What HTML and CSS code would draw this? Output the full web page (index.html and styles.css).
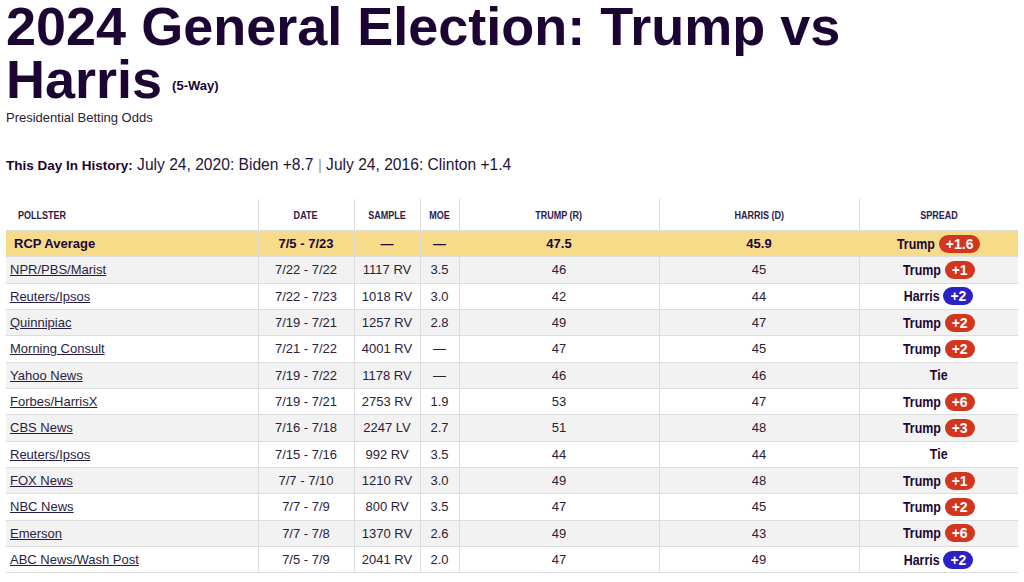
FILE: index.html
```html
<!DOCTYPE html>
<html>
<head>
<meta charset="utf-8">
<link rel="stylesheet" href="styles.css">
</head>
<body>
<div class="page">
  <h1 class="title">2024 General Election: Trump vs Harris<span class="way">(5-Way)</span></h1>
  <div class="subtitle">Presidential Betting Odds</div>
  <div class="history"><b>This Day In History:</b> July 24, 2020: Biden +8.7 <span class="sep">|</span> July 24, 2016: Clinton +1.4</div>
  <table class="polls">
    <colgroup>
      <col class="c-pollster"><col class="c-date"><col class="c-sample"><col class="c-moe"><col class="c-cand"><col class="c-cand"><col>
    </colgroup>
    <thead>
      <tr>
        <th class="pollster"><span class="hd">POLLSTER</span></th><th><span class="hd">DATE</span></th><th><span class="hd">SAMPLE</span></th><th><span class="hd">MOE</span></th><th><span class="hd">TRUMP (R)</span></th><th><span class="hd">HARRIS (D)</span></th><th><span class="hd">SPREAD</span></th>
      </tr>
    </thead>
    <tbody>
      <tr class="avg">
        <td class="pollster">RCP Average</td><td>7/5 - 7/23</td><td>—</td><td>—</td><td>47.5</td><td>45.9</td>
        <td><span class="spread"><span class="who">Trump</span><span class="badge r">+1.6</span></span></td>
      </tr>
      <tr><td class="pollster"><a href="#">NPR/PBS/Marist</a></td><td>7/22 - 7/22</td><td>1117 RV</td><td>3.5</td><td>46</td><td>45</td><td><span class="spread"><span class="who">Trump</span><span class="badge r">+1</span></span></td></tr>
      <tr><td class="pollster"><a href="#">Reuters/Ipsos</a></td><td>7/22 - 7/23</td><td>1018 RV</td><td>3.0</td><td>42</td><td>44</td><td><span class="spread"><span class="who">Harris</span><span class="badge d">+2</span></span></td></tr>
      <tr><td class="pollster"><a href="#">Quinnipiac</a></td><td>7/19 - 7/21</td><td>1257 RV</td><td>2.8</td><td>49</td><td>47</td><td><span class="spread"><span class="who">Trump</span><span class="badge r">+2</span></span></td></tr>
      <tr><td class="pollster"><a href="#">Morning Consult</a></td><td>7/21 - 7/22</td><td>4001 RV</td><td>—</td><td>47</td><td>45</td><td><span class="spread"><span class="who">Trump</span><span class="badge r">+2</span></span></td></tr>
      <tr><td class="pollster"><a href="#">Yahoo News</a></td><td>7/19 - 7/22</td><td>1178 RV</td><td>—</td><td>46</td><td>46</td><td><span class="spread"><span class="who">Tie</span></span></td></tr>
      <tr><td class="pollster"><a href="#">Forbes/HarrisX</a></td><td>7/19 - 7/21</td><td>2753 RV</td><td>1.9</td><td>53</td><td>47</td><td><span class="spread"><span class="who">Trump</span><span class="badge r">+6</span></span></td></tr>
      <tr><td class="pollster"><a href="#">CBS News</a></td><td>7/16 - 7/18</td><td>2247 LV</td><td>2.7</td><td>51</td><td>48</td><td><span class="spread"><span class="who">Trump</span><span class="badge r">+3</span></span></td></tr>
      <tr><td class="pollster"><a href="#">Reuters/Ipsos</a></td><td>7/15 - 7/16</td><td>992 RV</td><td>3.5</td><td>44</td><td>44</td><td><span class="spread"><span class="who">Tie</span></span></td></tr>
      <tr><td class="pollster"><a href="#">FOX News</a></td><td>7/7 - 7/10</td><td>1210 RV</td><td>3.0</td><td>49</td><td>48</td><td><span class="spread"><span class="who">Trump</span><span class="badge r">+1</span></span></td></tr>
      <tr><td class="pollster"><a href="#">NBC News</a></td><td>7/7 - 7/9</td><td>800 RV</td><td>3.5</td><td>47</td><td>45</td><td><span class="spread"><span class="who">Trump</span><span class="badge r">+2</span></span></td></tr>
      <tr><td class="pollster"><a href="#">Emerson</a></td><td>7/7 - 7/8</td><td>1370 RV</td><td>2.6</td><td>49</td><td>43</td><td><span class="spread"><span class="who">Trump</span><span class="badge r">+6</span></span></td></tr>
      <tr><td class="pollster"><a href="#">ABC News/Wash Post</a></td><td>7/5 - 7/9</td><td>2041 RV</td><td>2.0</td><td>47</td><td>49</td><td><span class="spread"><span class="who">Harris</span><span class="badge d">+2</span></span></td></tr>
    </tbody>
  </table>
</div>
</body>
</html>
```

FILE: styles.css
```css
html, body {
  margin: 0;
  padding: 0;
  background: #fff;
}
body {
  font-family: "Liberation Sans", Arial, Helvetica, sans-serif;
  color: #2a2237;
}
.page {
  padding: 0 6px;
}
.title {
  margin: 0;
  font-size: 54px;
  line-height: 53px;
  font-weight: 700;
  color: #1d0533;
}
.way {
  font-size: 13px;
  line-height: 13px;
  vertical-align: 8px;
  margin-left: 10px;
}
.subtitle {
  margin-top: 4px;
  font-size: 13px;
  line-height: 16px;
  color: #2a2237;
}
.history {
  margin-top: 30px;
  font-size: 15.6px;
  line-height: 18px;
  color: #24123a;
}
.history b {
  font-size: 13.5px;
  color: #1d0533;
}
.sep {
  color: #999;
  font-size: 15px;
}
.polls {
  margin-top: 24px;
  width: 1012px;
  border-collapse: collapse;
  font-size: 13px;
  table-layout: fixed;
}
.c-pollster { width: 252px; }
.c-date { width: 96px; }
.c-sample { width: 66px; }
.c-moe { width: 39px; }
.c-cand { width: 200px; }
.polls th {
  height: 31px;
  padding: 0;
  font-size: 11px;
  font-weight: 700;
  color: #2d1a4a;
  text-align: center;
  border-left: 1px solid #ddd;
  border-bottom: 1px solid #ddd;
  vertical-align: middle;
  white-space: nowrap;
}
.hd {
  display: inline-block;
  transform: scaleX(0.82);
  transform-origin: center;
}
.polls th.pollster .hd {
  transform-origin: left center;
}
.polls th:first-child,
.polls td:first-child {
  border-left: none;
}
.polls th.pollster {
  text-align: left;
  padding-left: 12px;
}
.polls td {
  height: 25.33px;
  padding: 0;
  text-align: center;
  border-left: 1px solid #ddd;
  border-bottom: 1px solid #ddd;
  vertical-align: middle;
  color: #2a2237;
}
.polls td.pollster {
  text-align: left;
  padding-left: 4px;
}
.polls tbody tr:nth-child(even) td {
  background: #f2f2f2;
}
.polls tbody tr:nth-child(odd) td {
  background: #fff;
}
.polls tbody tr.avg td {
  background: #f6dc88;
  font-weight: 700;
  color: #1d0533;
}
.polls tr.avg td.pollster {
  padding-left: 8px;
}
.polls a {
  color: #2a1d45;
  text-decoration: underline;
}
.spread {
  display: inline-flex;
  align-items: center;
  gap: 4px;
  font-weight: 700;
  color: #1d0533;
  white-space: nowrap;
  vertical-align: middle;
}
.who {
  display: inline-block;
  font-size: 15px;
  line-height: 18px;
  margin: 0 -4px;
  transform: scaleX(0.83);
}
.badge {
  display: inline-block;
  height: 18px;
  line-height: 18px;
  padding: 0 7px;
  border-radius: 9px;
  color: #fff;
  font-size: 14px;
}
.badge.r { background: #d2361e; }
.badge.d { background: #2a22c4; }
```
